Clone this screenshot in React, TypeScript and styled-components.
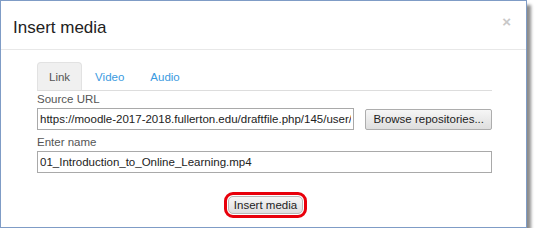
import React from 'react'
import styled, { createGlobalStyle } from 'styled-components'

const GlobalStyle = createGlobalStyle`
  html, body {
    margin: 0;
    padding: 0;
    background: #ffffff;
  }
  body {
    font-family: "Liberation Sans", Arial, sans-serif;
    color: #333333;
  }
`

const Dialog = styled.div`
  width: 525px;
  background: #ffffff;
  border: 1px solid #7f9cc6;
  box-shadow: 4px 5px 3px rgba(0, 0, 0, 0.45);
  display: flex;
  flex-direction: column;
  padding-bottom: 9px;
`

const Header = styled.div`
  display: flex;
  align-items: center;
  padding: 5px 14px 0 12px;
  box-sizing: border-box;
  height: 49px;
  border-bottom: 1px solid #e8e8e8;
`

const Title = styled.h3`
  margin: 0;
  flex: 1;
  font-size: 17px;
  font-weight: normal;
  color: #222222;
`

const Close = styled.span`
  font-size: 15px;
  font-weight: bold;
  color: #c8c8c8;
  margin-top: -12px;
  margin-right: 1px;
`

const Body = styled.div`
  padding: 12px 34px 0 36px;
  display: flex;
  flex-direction: column;
`

const TabBar = styled.div`
  display: flex;
  border-bottom: 1px solid #dddddd;
  height: 28px;
`

const Tab = styled.div<{ $active?: boolean }>`
  padding: 0 ${(p) => (p.$active ? 11 : 12)}px;
  display: flex;
  align-items: center;
  font-size: 11.5px;
  margin-bottom: -1px;
  border: 1px solid ${(p) => (p.$active ? '#e2e2e2' : 'transparent')};
  border-bottom-color: ${(p) => (p.$active ? '#dddddd' : 'transparent')};
  border-radius: 4px 4px 0 0;
  background: ${(p) => (p.$active ? '#f0f0f0' : 'transparent')};
  color: ${(p) => (p.$active ? '#555555' : '#3a9ae0')};
`

const Label = styled.label<{ $gap?: number }>`
  display: block;
  font-size: 11.5px;
  color: #555555;
  margin: ${(p) => p.$gap ?? 1}px 0 2px 0;
  line-height: 14px;
`

const Row = styled.div`
  display: flex;
  align-items: center;
  gap: 11px;
`

const Input = styled.input`
  flex: 1;
  min-width: 0;
  height: 22px;
  box-sizing: border-box;
  margin: 0;
  border: 1px solid #a9a9a9;
  border-radius: 0;
  padding: 0 2px;
  font-family: "Liberation Sans", Arial, sans-serif;
  font-size: 11.5px;
  color: #222222;
  background: #ffffff;
  outline: none;
`

const Button = styled.div`
  height: 19px;
  padding: 0 7px;
  display: flex;
  align-items: center;
  font-size: 11.5px;
  color: #222222;
  border: 1px solid #adadad;
  border-radius: 2px;
  background: linear-gradient(#f6f6f6, #dedede);
  white-space: nowrap;
  flex-shrink: 0;
`

const Footer = styled.div`
  display: flex;
  justify-content: center;
  margin-top: 19px;
  padding-left: 2px;
`

const Highlight = styled.div`
  border: 3px solid #e8000b;
  border-radius: 9px;
  padding: 1px;
`

const PrimaryButton = styled(Button)`
  border-radius: 5px;
  height: 16px;
  padding: 0 5px;
  border-color: #b8b8b8;
`

export default function App() {
  return (
    <>
      <GlobalStyle />
      <Dialog>
        <Header>
          <Title>Insert media</Title>
          <Close>×</Close>
        </Header>
        <Body>
          <TabBar>
            <Tab $active>Link</Tab>
            <Tab>Video</Tab>
            <Tab>Audio</Tab>
          </TabBar>
          <Label>Source URL</Label>
          <Row>
            <Input
              readOnly
              defaultValue="https://moodle-2017-2018.fullerton.edu/draftfile.php/145/user/draft/01_Introduction_to_Online_Learning.mp4"
            />
            <Button>Browse repositories...</Button>
          </Row>
          <Label $gap={5}>Enter name</Label>
          <Row>
            <Input readOnly defaultValue="01_Introduction_to_Online_Learning.mp4" />
          </Row>
          <Footer>
            <Highlight>
              <PrimaryButton>Insert media</PrimaryButton>
            </Highlight>
          </Footer>
        </Body>
      </Dialog>
    </>
  )
}
